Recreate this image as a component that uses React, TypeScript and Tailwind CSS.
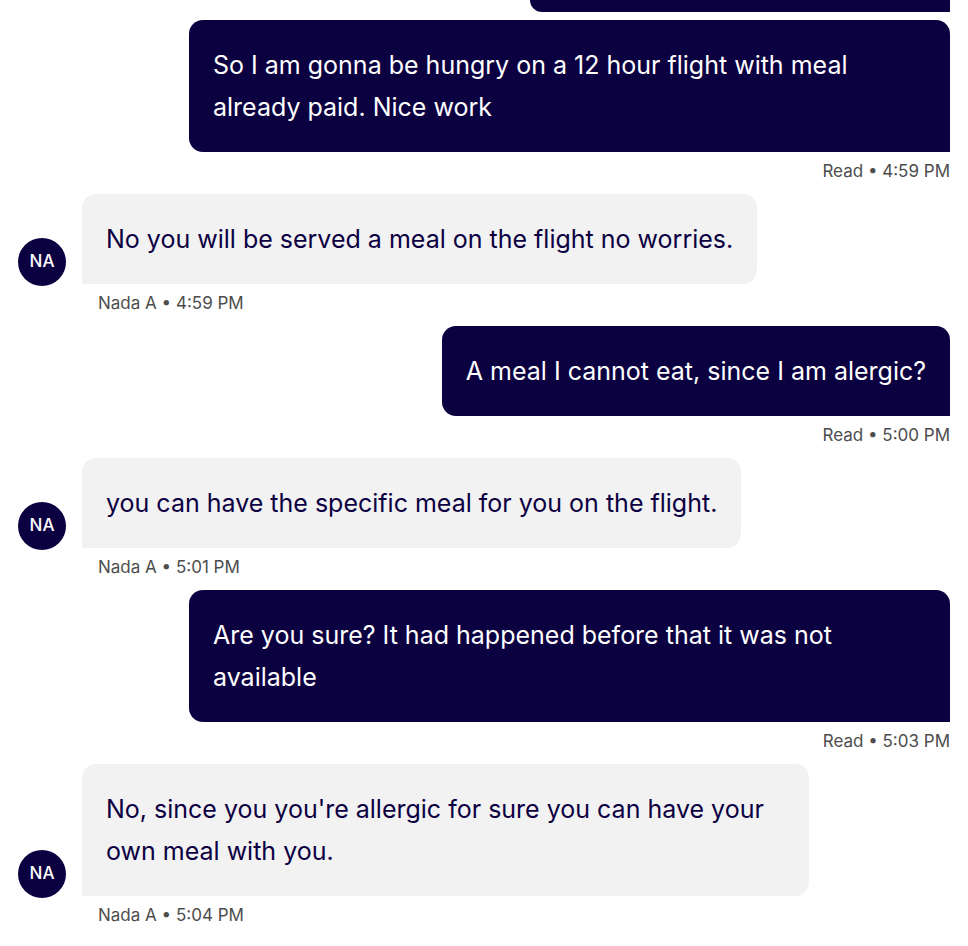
import { FC } from "react";

type Msg = {
  from: "me" | "agent";
  text: string;
  meta?: string;
};

const messages: Msg[] = [
  {
    from: "me",
    text: "So I am gonna be hungry on a 12 hour flight with meal already paid. Nice work",
    meta: "Read • 4:59 PM",
  },
  {
    from: "agent",
    text: "No you will be served a meal on the flight no worries.",
    meta: "Nada A • 4:59 PM",
  },
  { from: "me", text: "A meal I cannot eat, since I am alergic?", meta: "Read • 5:00 PM" },
  {
    from: "agent",
    text: "you can have the specific meal for you on the flight.",
    meta: "Nada A • 5:01 PM",
  },
  {
    from: "me",
    text: "Are you sure? It had happened before that it was not available",
    meta: "Read • 5:03 PM",
  },
  {
    from: "agent",
    text: "No, since you you're allergic for sure you can have your own meal with you.",
    meta: "Nada A • 5:04 PM",
  },
];

const Avatar: FC = () => (
  <div className="w-12 h-12 shrink-0 rounded-full bg-[#0b0040] text-white flex items-center justify-center text-[17px] font-medium mb-[-2px]">
    NA
  </div>
);

const App: FC = () => {
  return (
    <div
      className="w-full h-[946px] overflow-hidden bg-white"
      style={{ fontFamily: "Inter, 'Open Sans', sans-serif" }}
    >
      <div className="flex flex-col px-[18px]">
        {/* previous message, scrolled mostly out of view */}
        <div className="self-end w-[420px] h-3 mb-2 bg-[#0b0040] rounded-bl-[14px]" />
        {messages.map((m, i) =>
          m.from === "me" ? (
            <div key={i} className="flex flex-col items-end mb-3">
              <div className="max-w-[761px] bg-[#0b0040] text-white text-[25px] leading-[42px] px-6 py-6 rounded-[14px] rounded-br-none">
                {m.text}
              </div>
              <div className="mt-2 text-[17px] leading-[22px] text-[#4d4d4d]">{m.meta}</div>
            </div>
          ) : (
            <div key={i} className="flex flex-col mb-3">
              <div className="flex items-end gap-4">
                <Avatar />
                <div className="max-w-[727px] bg-[#f2f2f2] text-[#0c0042] text-[25px] leading-[42px] px-6 py-6 rounded-[14px] rounded-bl-none">
                  {m.text}
                </div>
              </div>
              <div className="mt-2 pl-[80px] text-[17px] leading-[22px] text-[#4d4d4d]">{m.meta}</div>
            </div>
          )
        )}
      </div>
    </div>
  );
};

export default App;
